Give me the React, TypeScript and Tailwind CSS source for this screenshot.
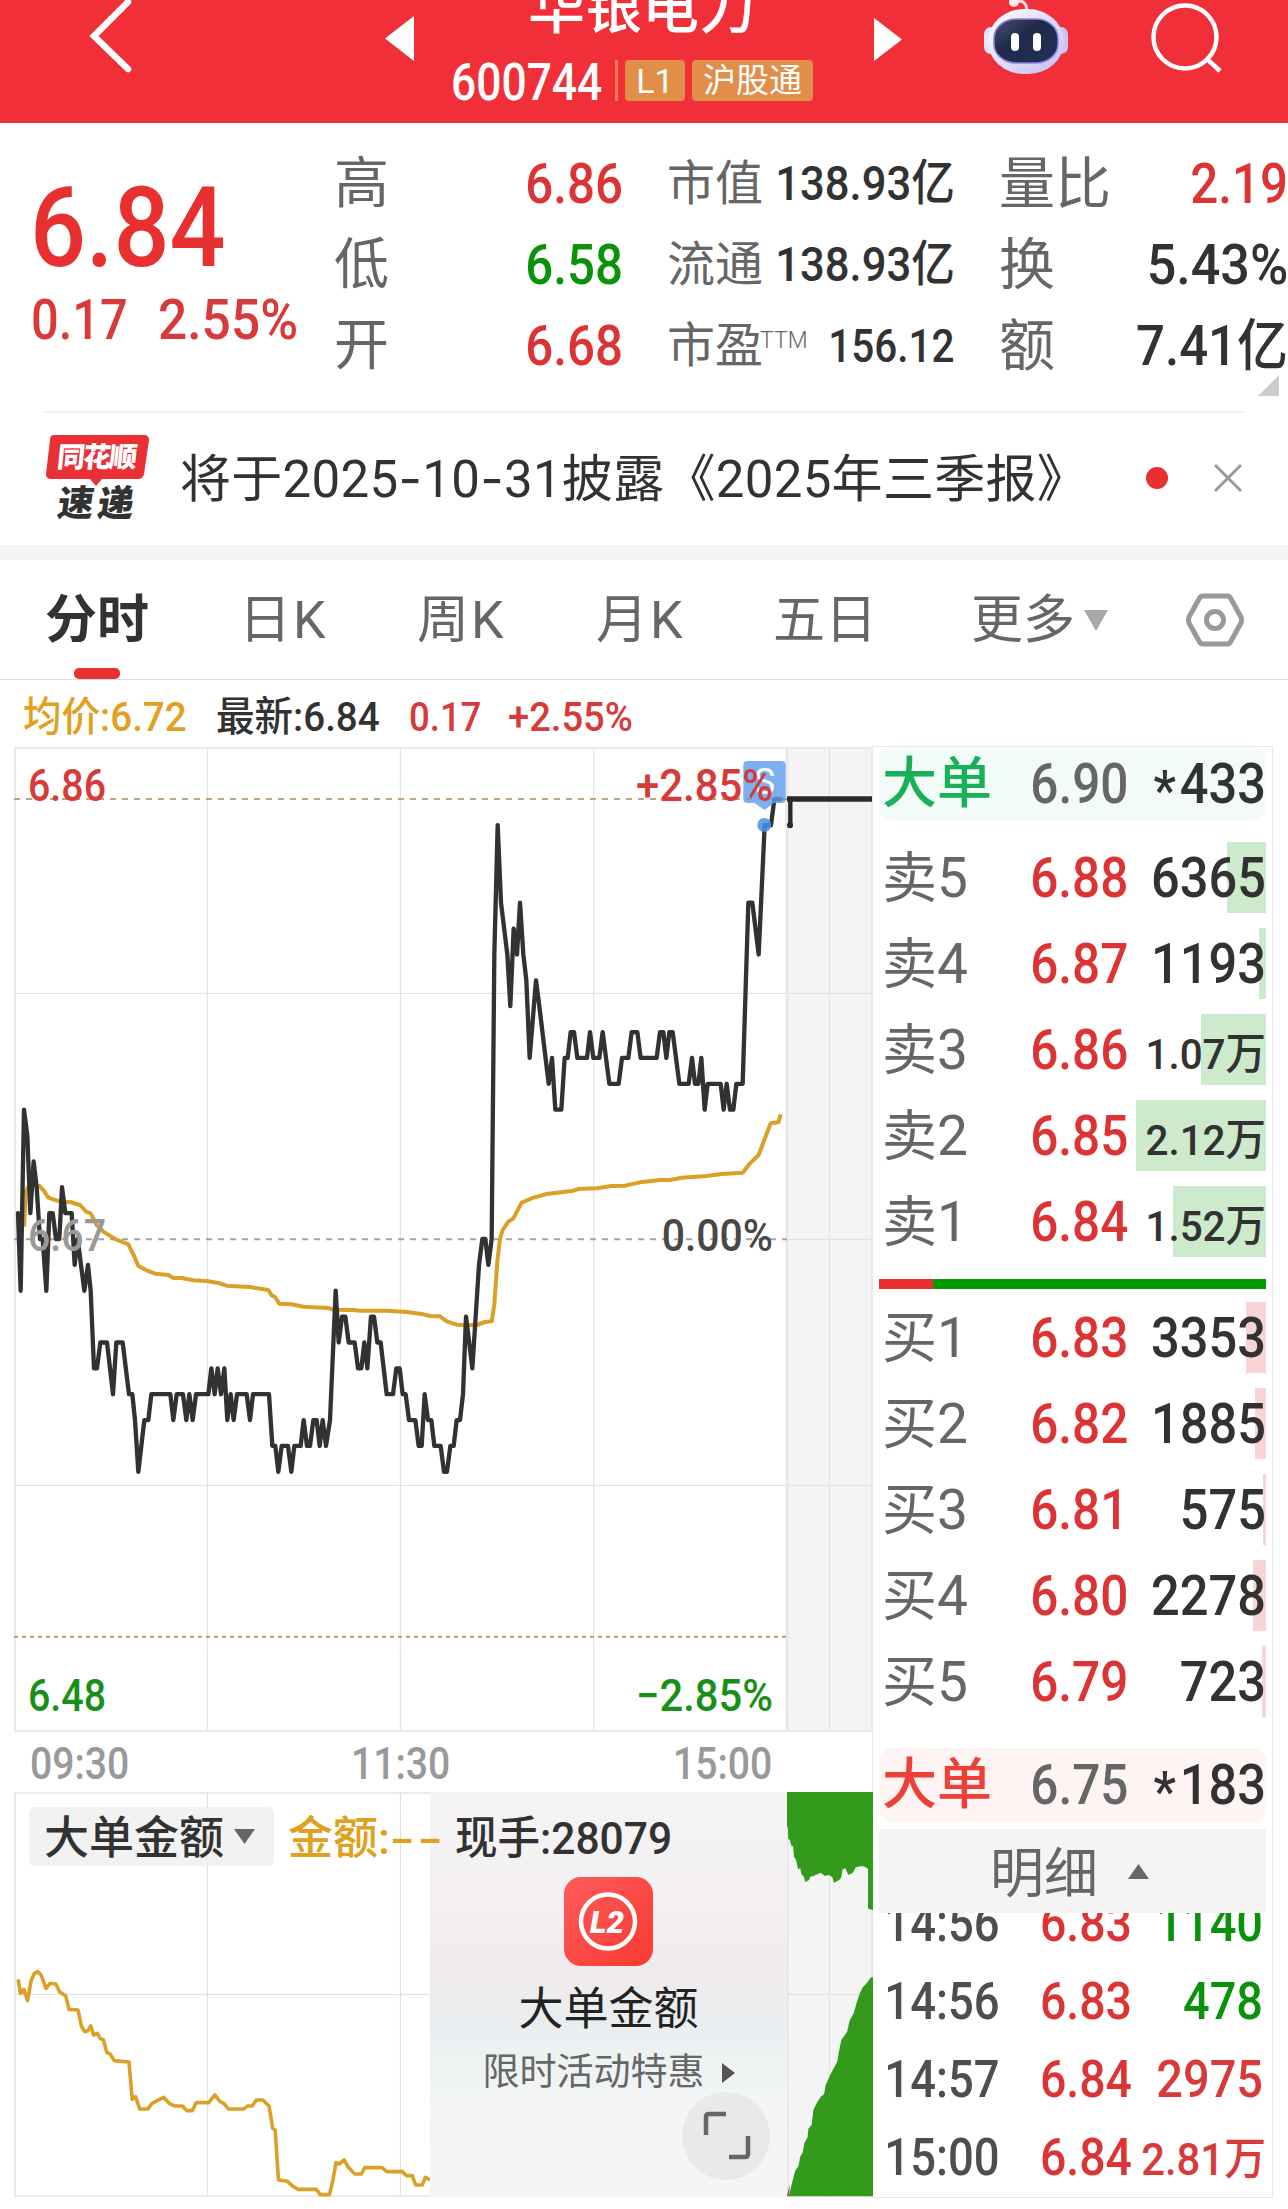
import type { ReactNode } from 'react';

interface Stat {
  label: ReactNode;
  value: string;
  color: string;
}

interface Quote {
  label: string;
  price: string;
  volume: string;
  bar: number;
}

interface Trade {
  time: string;
  price: string;
  volume: string;
  color: string;
}

const statsLeft: Stat[] = [
  { label: '高', value: '6.86', color: 'scale-x-[0.88] text-[#dc3434]' },
  { label: '低', value: '6.58', color: 'scale-x-[0.88] text-[#0a930a]' },
  { label: '开', value: '6.68', color: 'scale-x-[0.88] text-[#dc3434]' },
];

const statsMiddle: Stat[] = [
  { label: '市值', value: '138.93亿', color: 'scale-x-[0.89] text-[#323232] text-[49px]' },
  { label: '流通', value: '138.93亿', color: 'scale-x-[0.89] text-[#323232] text-[49px]' },
  {
    label: (
      <>
        市盈<sup className="-left-[3px] -top-3.5 text-[23px] font-light leading-none">TTM</sup>
      </>
    ),
    value: '156.12',
    color: 'scale-x-[0.88] text-[#323232] text-[46px]',
  },
];

const statsRight: Stat[] = [
  { label: '量比', value: '2.19', color: 'scale-x-[0.88] text-[#dc3434]' },
  { label: '换', value: '5.43%', color: 'scale-x-[0.93] text-[#323232]' },
  { label: '额', value: '7.41亿', color: 'scale-x-[0.91] text-[#323232]' },
];

const sells: Quote[] = [
  { label: '卖5', price: '6.88', volume: '6365', bar: 39 },
  { label: '卖4', price: '6.87', volume: '1193', bar: 7 },
  { label: '卖3', price: '6.86', volume: '1.07万', bar: 65 },
  { label: '卖2', price: '6.85', volume: '2.12万', bar: 130 },
  { label: '卖1', price: '6.84', volume: '1.52万', bar: 93 },
];

const buys: Quote[] = [
  { label: '买1', price: '6.83', volume: '3353', bar: 20 },
  { label: '买2', price: '6.82', volume: '1885', bar: 11 },
  { label: '买3', price: '6.81', volume: '575', bar: 3 },
  { label: '买4', price: '6.80', volume: '2278', bar: 13 },
  { label: '买5', price: '6.79', volume: '723', bar: 4 },
];

const trades: Trade[] = [
  { time: '14:56', price: '6.83', volume: '1140', color: 'text-[#0a930a]' },
  { time: '14:56', price: '6.83', volume: '478', color: 'text-[#0a930a]' },
  { time: '14:57', price: '6.84', volume: '2975', color: 'text-[#d63a3a]' },
  { time: '15:00', price: '6.84', volume: '2.81万', color: 'text-[#d63a3a]' },
];

// [x, ticks above or below the previous close]
const priceTicks: [number, number][] = [
  [54, 1], [62, -2], [72, 5], [82, 4], [91, 1], [101, 3], [110, 2], [120, 0], [128, 0], [139, -2],
  [148, 1], [158, 1], [168, 0], [178, 0], [186, 2], [196, 1], [215, 1], [224, -1], [233, 0], [253, -2],
  [264, -1], [272, -2], [282, -5], [291, -5], [301, -4], [321, -4], [339, -6], [349, -4], [368, -4],
  [387, -6], [397, -6], [405, -7], [415, -9], [433, -7], [445, -7], [454, -6], [511, -6], [520, -7],
  [530, -6], [549, -6], [559, -7], [568, -6], [578, -7], [588, -6], [625, -6], [634, -5], [644, -6],
  [653, -5], [663, -6], [673, -5], [682, -7], [692, -6], [701, -7], [711, -6], [740, -6], [750, -7],
  [759, -6], [807, -6], [817, -8], [826, -8], [835, -9], [845, -8], [864, -8], [874, -9], [883, -8],
  [902, -8], [911, -7], [921, -8], [930, -8], [940, -7], [950, -7], [959, -8], [968, -7], [978, -8],
  [990, -7], [1007, -2], [1016, -4], [1026, -3], [1036, -3], [1046, -4], [1064, -4], [1074, -5],
  [1084, -5], [1093, -4], [1102, -5], [1113, -3], [1122, -3], [1132, -4], [1142, -4], [1160, -6],
  [1179, -6], [1189, -5], [1199, -5], [1208, -6], [1217, -6], [1227, -7], [1246, -7], [1256, -8],
  [1265, -8], [1274, -6], [1284, -7], [1294, -7], [1303, -8], [1322, -8], [1332, -9], [1341, -9],
  [1351, -8], [1361, -8], [1370, -7], [1380, -7], [1389, -6], [1398, -3], [1417, -5], [1437, -1],
  [1447, 0], [1456, 0], [1465, -1], [1475, 0], [1483, 11], [1493, 16], [1503, 13], [1522, 11],
  [1531, 9], [1541, 12], [1551, 11], [1560, 13], [1570, 11], [1579, 10], [1589, 7], [1608, 10],
  [1618, 9], [1646, 6], [1656, 7], [1666, 5], [1684, 5], [1694, 7], [1703, 7], [1712, 8], [1722, 8],
  [1732, 7], [1761, 7], [1770, 8], [1780, 7], [1798, 7], [1808, 8], [1828, 6], [1856, 6], [1866, 7],
  [1885, 7], [1895, 8], [1912, 8], [1922, 7], [1970, 7], [1980, 8], [1990, 8], [1999, 7], [2008, 8],
  [2018, 8], [2038, 6], [2066, 6], [2076, 7], [2085, 6], [2095, 6], [2104, 7], [2114, 5], [2123, 6],
  [2162, 6], [2171, 5], [2180, 6], [2190, 5], [2200, 5], [2209, 6], [2228, 6], [2245, 13], [2257, 13],
  [2276, 11], [2294, 16], [2313, 16], [2323, 17], [2342, 17],
];

const pricePoints = priceTicks.map(([x, t]) => `${x},${1497 - t * 77.6}`).join(' ');

const averagePoints =
  '72,1460 78,1350 90,1335 118,1338 130,1350 145,1373 180,1385 210,1386 240,1395 258,1415 272,1420 290,1455 310,1475 345,1497 385,1513 400,1543 415,1578 440,1591 465,1601 505,1605 520,1614 545,1614 580,1621 620,1623 655,1629 680,1637 750,1641 805,1650 815,1666 825,1671 838,1691 875,1693 910,1700 985,1704 1000,1709 1060,1710 1080,1712 1160,1712 1220,1716 1270,1723 1290,1728 1320,1729 1340,1744 1370,1754 1400,1755 1430,1755 1455,1746 1475,1744 1483,1693 1492,1564 1500,1497 1508,1470 1525,1445 1540,1435 1565,1388 1600,1373 1640,1362 1720,1352 1735,1347 1790,1345 1835,1338 1875,1337 1920,1327 1980,1320 2010,1320 2045,1313 2120,1308 2165,1302 2228,1298 2250,1270 2276,1245 2312,1150 2335,1147 2342,1123';

const amountPoints =
  '44,598 50,640 58,628 67,662 76,600 84,580 92,575 100,585 112,625 122,610 136,612 145,635 160,648 168,688 190,690 198,738 206,755 214,752 221,738 228,765 237,760 244,776 252,780 260,818 268,822 278,842 314,846 322,958 330,950 340,987 360,987 370,970 398,952 412,970 425,978 444,978 455,992 468,992 478,968 508,968 523,945 536,965 545,970 556,987 594,987 602,978 614,978 624,960 640,960 655,978 664,1045 670,1050 678,1200 700,1204 712,1218 726,1228 770,1228 780,1244 802,1244 810,1205 818,1148 826,1152 838,1140 848,1162 864,1182 880,1182 888,1163 930,1163 942,1175 980,1175 990,1187 1004,1187 1012,1215 1028,1215 1036,1192 1047,1200';

function RobotIcon() {
  return (
    <svg className="h-[76px] w-[86px]" viewBox="0 0 86 76">
      <defs>
        <linearGradient id="shell" x1="0" y1="0" x2="1" y2="1">
          <stop offset="0" stopColor="#ffffff" />
          <stop offset="1" stopColor="#c3bdf0" />
        </linearGradient>
        <linearGradient id="visor" x1="0" y1="0" x2="1" y2="1">
          <stop offset="0" stopColor="#4a5270" />
          <stop offset="0.4" stopColor="#1f2a4a" />
          <stop offset="1" stopColor="#25305a" />
        </linearGradient>
      </defs>
      <path d="M31 3c6-4 12-2 13 7" fill="none" stroke="#f6dfe8" strokeWidth="3" />
      <circle cx="31" cy="2" r="5" fill="#fbe9ee" />
      <rect x="1" y="27" width="14" height="27" rx="7" fill="#e3e3fa" />
      <rect x="71" y="27" width="14" height="27" rx="7" fill="#c9c5f2" />
      <rect x="5" y="9" width="76" height="65" rx="36" ry="33" fill="url(#shell)" />
      <rect x="11" y="19" width="64" height="44" rx="22" ry="19" fill="url(#visor)" stroke="#8f80e6" strokeWidth="1.500" />
      <rect x="28" y="33" width="8" height="18" rx="4" fill="#fff" />
      <rect x="50" y="33" width="8" height="18" rx="4" fill="#fff" />
    </svg>
  );
}

function Header() {
  return (
    <header className="flex h-[123px] items-start overflow-hidden bg-[#f12f38] text-white">
      <svg className="ml-[84px] h-[78px] w-[52px] shrink-0" viewBox="0 0 52 78">
        <path d="M44 2 10 36l34 33" fill="none" stroke="#fff" strokeWidth="6.500" strokeLinecap="round" />
      </svg>
      <svg className="ml-[249px] mt-4 h-[45px] w-[29px] shrink-0" viewBox="0 0 29 45">
        <path d="M29 0v45L0 22.5z" fill="#fff" />
      </svg>
      <div className="ml-[36px] w-[365px] shrink-0">
        <div className="-mt-[20px] ml-[78px] h-[56px] text-[57px] font-medium leading-none">华银电力</div>
        <div className="mt-[24px] flex h-[41px] items-center">
          <span className="w-[165px] origin-left translate-x-px scale-x-[0.87] pt-1 text-[51px] font-medium leading-none">600744</span>
          <span className="h-[41px] w-[3px] bg-[#fb7a4b]" />
          <span className="ml-[7px] flex h-[41px] w-[60px] items-center justify-center rounded bg-[#e08e48] text-[34px] leading-none">
            L1
          </span>
          <span className="ml-[7px] flex h-[41px] w-[121px] items-center justify-center rounded bg-[#e08e48] text-[33px] leading-none">
            沪股通
          </span>
        </div>
      </div>
      <svg className="ml-[59px] mt-[18px] h-[43px] w-[28px] shrink-0" viewBox="0 0 28 43">
        <path d="M0 0v43l28-21.5z" fill="#fff" />
      </svg>
      <div className="ml-[81px] shrink-0">
        <RobotIcon />
      </div>
      <svg className="ml-[78px] h-[76px] w-[78px] shrink-0" viewBox="0 0 78 76">
        <circle cx="38" cy="37" r="31.500" fill="none" stroke="#fff" strokeWidth="4.500" />
        <path d="M60 59l13 12" stroke="#fff" strokeWidth="4.500" />
      </svg>
    </header>
  );
}

function StatColumn({ stats, className, labelClass }: { stats: Stat[]; className: string; labelClass: string }) {
  return (
    <div className={`flex flex-col pt-[20px] ${className}`}>
      {stats.map((s, i) => (
        <div key={i} className="flex h-[81px] items-center justify-between whitespace-nowrap">
          <span className={`leading-none text-[#666] ${labelClass}`}>{s.label}</span>
          <span className={`-ml-[24px] origin-right font-medium leading-none ${s.color}`}>{s.value}</span>
        </div>
      ))}
    </div>
  );
}

function Summary() {
  return (
    <section className="relative grid h-[288px] grid-cols-[303px_333px_332px_289px] pl-[31px]">
      <div className="whitespace-nowrap pt-[49px] text-[#e83030]">
        <div className="-ml-[1px] origin-left scale-x-[0.88] text-[112px] font-medium leading-none">6.84</div>
        <div className="mt-[8px] flex text-[56px] font-medium leading-none text-[#d63a3a]">
          <span className="w-[127px] origin-left scale-x-[0.87]">0.17</span>
          <span className="origin-left scale-x-[0.92]">2.55%</span>
        </div>
      </div>
      <StatColumn stats={statsLeft} className="pr-[44px] text-[56px]" labelClass="text-[55px]" />
      <StatColumn stats={statsMiddle} className="pr-[44px]" labelClass="text-[48px]" />
      <StatColumn stats={statsRight} className="text-[56px]" labelClass="text-[56px]" />
      <svg className="absolute right-[9px] top-[252px] h-[21px] w-[21px]" viewBox="0 0 21 21">
        <path d="M21 0v21H0z" fill="#ccc" />
      </svg>
    </section>
  );
}

function News() {
  return (
    <section className="mx-[45px] flex h-[134px] items-center border-t-2 border-[#f0f0f0] pb-1">
      <svg className="h-[90px] w-[106px] shrink-0 overflow-visible" viewBox="0 0 106 90">
        <path d="M9 3h90q5 0 5 5l-5 34q-1 5-6 5H57l-6 7-6-7H6q-5 0-5-5L5 8q0-5 4-5z" fill="#e83035" />
        <text x="12" y="35" fontSize="28" fontWeight="900" fill="#fff" textLength="80" transform="skewX(-6) translate(3 0)">
          同花顺
        </text>
        <text x="14" y="84" fontSize="36" fontWeight="900" fill="#323232" textLength="76" transform="skewX(-8) translate(9 0)">
          速递
        </text>
      </svg>
      <p className="ml-[29px] w-[930px] whitespace-nowrap pt-[4px] text-[51px] leading-none tracking-[0.3px] text-[#323232]">
        将于2025<span className="font-['Inter']">-</span>10<span className="font-['Inter']">-</span>31披露《2025年三季报》
      </p>
      <span className="ml-[38px] mt-[2px] h-[22px] w-[22px] shrink-0 rounded-full bg-[#e83030]" />
      <svg className="ml-[45px] mt-[2px] h-[30px] w-[30px] shrink-0" viewBox="0 0 30 30">
        <path d="M2 2l26 26M28 2L2 28" stroke="#999" strokeWidth="3" />
      </svg>
    </section>
  );
}

function Tabs() {
  return (
    <nav className="grid h-[120px] grid-cols-[194px_178px_179px_177px_198px_215px_auto] items-center border-b border-[#ddd] pl-[45px] text-[52px] leading-none text-[#666]">
      <span className="relative flex h-full items-center pt-[2px] font-bold text-[#323232]">
        分时
        <i className="absolute bottom-0 left-[29px] h-[11px] w-[46px] rounded-[5px] bg-[#e83030]" />
      </span>
      <span className="pt-[2px] tracking-[2px]">日K</span>
      <span className="pt-[2px] tracking-[2px]">周K</span>
      <span className="pt-[2px] tracking-[2px]">月K</span>
      <span className="pt-[2px]">五日</span>
      <span className="flex items-center gap-[8px] pt-[2px]">
        更多
        <svg className="h-[21px] w-[26px]" viewBox="0 0 26 21">
          <path d="M1 0h24L13 21z" fill="#a9a9a9" />
        </svg>
      </span>
      <svg className="h-[56px] w-[58px]" viewBox="0 0 58 56">
        <path d="M17 4h24q3 0 4 3l10 18q1 3 0 6L45 49q-1 3-4 3H17q-3 0-4-3L3 31q-1-3 0-6L13 7q1-3 4-3z" fill="none" stroke="#999" strokeWidth="5" />
        <circle cx="29" cy="28" r="8.500" fill="none" stroke="#999" strokeWidth="5" />
      </svg>
    </nav>
  );
}

function Legend() {
  return (
    <div className="grid h-[67px] grid-cols-[193px_193px_99px_auto] items-center whitespace-nowrap pl-[23px] pt-[7px] text-[41px] font-medium leading-none">
      <span className="origin-left scale-x-[0.94] text-[#e0a020]">均价:6.72</span>
      <span className="origin-left scale-x-[0.94] text-[#323232]">最新:6.84</span>
      <span className="origin-left scale-x-[0.89] text-[#d63a3a]">0.17</span>
      <span className="origin-left scale-x-[0.93] text-[#d63a3a]">+2.55%</span>
    </div>
  );
}

function PriceChart() {
  return (
    <svg className="block h-[985px] w-[859px]" viewBox="42 21 2577 2955">
      <rect x="2361" y="21" width="258" height="2955" fill="#f4f4f4" />
      <g stroke="#dedede" strokeWidth="3">
        <path d="M622 21v2955M1201 21v2955M1781 21v2955M2488 21v2955" />
        <path d="M42 760h2577M42 2236h2577M2361 1498h258" />
      </g>
      <g fill="none" stroke="#e9e9e9" strokeWidth="6">
        <path d="M45 24h2571v2949H45z" />
        <path d="M2361 24v2949" strokeWidth="10" />
      </g>
      <path d="M42 177h2319" stroke="#bfa67a" strokeWidth="6" strokeDasharray="18 18" />
      <path d="M42 1498h2319" stroke="#a4a4a4" strokeWidth="6" strokeDasharray="18 18" />
      <path d="M42 2690h2319" stroke="#c49a66" strokeWidth="6" strokeDasharray="12 12" />
      <polyline points={averagePoints} fill="none" stroke="#dba026" strokeWidth="12" strokeLinejoin="round" />
      <polyline points={pricePoints} fill="none" stroke="#323232" strokeWidth="13" strokeLinejoin="round" strokeLinecap="round" />
      <path d="M2361 177h258" stroke="#2b2b2b" strokeWidth="17" />
      <path d="M2371 177v80" stroke="#2b2b2b" strokeWidth="13" strokeLinecap="round" />
      <circle cx="2370" cy="256" r="9" fill="#2b2b2b" />
      <path d="M2242 63h103q12 0 12 12v102q0 12-12 12h-23l-29 21-29-21h-22q-12 0-12-12V75q0-12 12-12z" fill="#5c9cec" fillOpacity="0.8" />
      <circle cx="2293" cy="255" r="21" fill="#4a8fe6" fillOpacity="0.85" />
      <text x="2293" y="163" fontSize="108" fill="#fff" textAnchor="middle">S</text>
      <g fontSize="135" fontWeight="500">
        <text x="84" y="182" fill="#d63a3a" textLength="234" lengthAdjust="spacingAndGlyphs">6.86</text>
        <text x="84" y="1532" fill="#999" textLength="234" lengthAdjust="spacingAndGlyphs">6.67</text>
        <text x="84" y="2913" fill="#189018" textLength="234" lengthAdjust="spacingAndGlyphs">6.48</text>
        <text x="1908" y="182" fill="#d63a3a" textLength="411" lengthAdjust="spacingAndGlyphs">+2.85%</text>
        <text x="1985" y="1532" fill="#484848" textLength="334" lengthAdjust="spacingAndGlyphs">0.00%</text>
        <text x="1908" y="2913" fill="#189018" textLength="411" lengthAdjust="spacingAndGlyphs">−2.85%</text>
      </g>
    </svg>
  );
}

function PromoPanel() {
  return (
    <div className="relative flex h-full w-[357px] flex-col items-center bg-[linear-gradient(180deg,#f5f4f5_0%,#f4f0f3_25%,#f1eaec_44%,#eaedef_56%,#edf2f3_66%,#f4f5f7_78%,#f6f4f7_100%)] pt-[85px]">
      <svg className="h-[89px] w-[89px]" viewBox="0 0 89 89">
        <defs>
          <linearGradient id="badge" x1="0" y1="0" x2="1" y2="1">
            <stop offset="0" stopColor="#fe5b5b" />
            <stop offset="1" stopColor="#f93a30" />
          </linearGradient>
        </defs>
        <rect width="89" height="89" rx="17" fill="url(#badge)" />
        <circle cx="44" cy="44.500" r="27" fill="none" stroke="#fff" strokeWidth="4.500" />
        <text x="43" y="56" fontSize="31" fontWeight="900" fontStyle="italic" fill="#fff" textAnchor="middle" textLength="34" lengthAdjust="spacingAndGlyphs">
          L2
        </text>
      </svg>
      <div className="mt-[21px] text-[45px] leading-none text-[#222]">大单金额</div>
      <div className="mt-[22px] flex items-center gap-[17px] text-[37px] leading-none text-[#666]">
        限时活动特惠
        <svg className="h-[20px] w-[13px]" viewBox="0 0 13 20">
          <path d="M0 0l13 10L0 20z" fill="#555" />
        </svg>
      </div>
      <div className="absolute left-[252px] top-[300px] flex h-[88px] w-[88px] items-center justify-center rounded-full bg-[#e9e9e9]">
        <svg className="h-[50px] w-[50px]" viewBox="0 0 50 50">
          <path d="M5 24V6q0-3 3-3h17M28 46h16q3 0 3-3V25" fill="none" stroke="#666" strokeWidth="4.500" />
        </svg>
      </div>
    </div>
  );
}

function AmountChart() {
  return (
    <div className="relative flex h-[405px] w-[859px]">
      <svg className="h-full w-[416px]" viewBox="34 36 1013 1215" preserveAspectRatio="none">
        <path d="M505 36v1215M975 36v1215M34 643h1013" stroke="#dedede" vectorEffect="non-scaling-stroke" />
        <path d="M1047 38H36v1211h1011" fill="none" stroke="#e9e9e9" strokeWidth="2" vectorEffect="non-scaling-stroke" />
        <polyline points={amountPoints} fill="none" stroke="#dba026" strokeWidth="3.600" strokeLinejoin="round" vectorEffect="non-scaling-stroke" />
      </svg>
      <PromoPanel />
      <svg className="h-full w-[86px]" viewBox="348 36 209 1215" preserveAspectRatio="none">
        <rect x="348" y="36" width="209" height="1215" fill="#f4f4f4" />
        <path d="M451 36v1215M348 643h209M350 36v1215" stroke="#dedede" vectorEffect="non-scaling-stroke" />
        <path d="M555 36v1215" stroke="#e6e6e6" strokeWidth="2" vectorEffect="non-scaling-stroke" />
        <path
          d="M348 36H557V390L545 386V268L540 262 530 258 515 262 508 278 497 285 490 265 483 268 480 292 475 300 462 308 458 292 450 285 440 288 430 278 412 288 404 290 402 300 392 306 389 290 383 282 380 265 375 268 370 240 365 230 363 200 358 196 355 180 351 176 350 140 348 140z"
          fill="#339a1c"
        />
        <path
          d="M353 1249L358 1220 362 1200 368 1172 376 1158 380 1130 386 1118 390 1090 398 1072 400 1046 408 1034 412 990 420 970 430 950 438 943 442 915 455 880 470 845 475 810 480 780 494 756 500 722 510 700 518 665 525 640 532 622 540 612 552 592H557V1249z"
          fill="#339a1c"
        />
        <path d="M348 1249L354 1215V1249z" fill="#a0522d" />
      </svg>
      <div className="absolute left-[15px] top-[15px] flex h-[59px] items-center whitespace-nowrap text-[45px] font-medium leading-none text-[#323232]">
        <div className="flex h-full w-[245px] items-center rounded-md bg-[#f1f1f1]/90 pl-[15px]">
          <span className="pt-[3px]">大单金额</span>
          <svg className="ml-[10px] h-[15px] w-[21px]" viewBox="0 0 21 15">
            <path d="M0 0h21L10.500 15z" fill="#666" />
          </svg>
        </div>
        <span className="ml-[14px] w-[167px] pt-[3px] text-[#e0a020]">
          金额:<span className="inline-block w-[28px] origin-left scale-x-[1.6]">-</span>
          <span className="inline-block origin-left scale-x-[1.6]">-</span>
        </span>
        <span className="origin-left scale-x-[0.945] pt-[3px]">现手:28079</span>
      </div>
    </div>
  );
}

function QuoteRow({ quote, side }: { quote: Quote; side: 'sell' | 'buy' }) {
  const large = quote.volume.endsWith('万');
  return (
    <div className="relative flex h-[86px] items-center leading-none">
      <span
        className={`absolute right-0 top-[7px] h-[71px] ${side === 'sell' ? 'bg-[#cdeacd]' : 'bg-[#f9d4d4]'}`}
        style={{ width: quote.bar }}
      />
      <span className="relative w-[100px] pl-[3px] text-[55px] text-[#666]">{quote.label}</span>
      <span className="relative w-[150px] origin-right scale-x-[0.9] text-right text-[55px] font-medium text-[#dc3434]">
        {quote.price}
      </span>
      <span
        className={`relative w-[138px] shrink-0 origin-right whitespace-nowrap text-right font-medium text-[#323232] ${
          large ? 'scale-x-[0.94] pt-[8px] text-[43px]' : 'scale-x-[0.92] text-[55px]'
        }`}
      >
        {quote.volume}
      </span>
    </div>
  );
}

function BigOrder({ price, volume, className }: { price: string; volume: string; className: string }) {
  return (
    <div className={`flex h-[74px] items-center rounded-[14px] leading-none ${className}`}>
      <span className="w-[115px] pb-[2px] pl-[3px] text-[55px] font-medium">大单</span>
      <span className="w-[135px] origin-right scale-x-[0.9] text-right text-[55px] font-medium text-[#666]">{price}</span>
      <span className="flex w-[138px] shrink-0 origin-right scale-x-[0.92] items-center justify-end text-[55px] font-medium text-[#323232]">
        <span className="mr-1 pt-[14px]">*</span>
        {volume}
      </span>
    </div>
  );
}

function OrderBook() {
  return (
    <aside className="-mt-px h-[1452px] w-[401px] overflow-hidden border border-[#e8e8e8] px-[6px]">
      <BigOrder price="6.90" volume="433" className="bg-[#f2fbf7] text-[#18b058]" />
      <div className="mt-[14px]">
        {sells.map(q => (
          <QuoteRow key={q.label} quote={q} side="sell" />
        ))}
      </div>
      <div className="mt-[14px] flex h-[10px]">
        <span className="w-[54px] bg-[#e83030]" />
        <span className="flex-1 bg-[#009b00]" />
      </div>
      <div className="mt-[6px]">
        {buys.map(q => (
          <QuoteRow key={q.label} quote={q} side="buy" />
        ))}
      </div>
      <div className="mt-[23px]">
        <BigOrder price="6.75" volume="183" className="bg-[#fef4f3] text-[#ee4036]" />
      </div>
      <div className="relative z-10 mt-[7px] flex h-[84px] items-center bg-[#f4f4f4] pl-[111px] text-[54px] leading-none text-[#666]">
        <span className="pt-[7px]">明细</span>
        <svg className="ml-[30px] h-[15px] w-[21px]" viewBox="0 0 21 15">
          <path d="M10.500 0L21 15H0z" fill="#666" />
        </svg>
      </div>
      <div className="-mt-[29px]">
        {trades.map((t, i) => (
          <div key={i} className="flex h-[78px] items-center whitespace-nowrap text-[51px] font-medium leading-none">
            <span className="w-[120px] origin-left scale-x-[0.89] pl-[6px] text-[#4e4e4e]">{t.time}</span>
            <span className="w-[133px] origin-right scale-x-[0.91] text-right text-[#dc3434]">{t.price}</span>
            <span
              className={`w-[131px] shrink-0 origin-right text-right ${t.color} ${
                t.volume.endsWith('万') ? 'scale-x-[0.93] pt-[5px] text-[45px]' : 'scale-x-[0.92]'
              }`}
            >
              {t.volume}
            </span>
          </div>
        ))}
      </div>
    </aside>
  );
}

export default function App() {
  return (
    <div className="h-[2209px] w-[1288px] overflow-hidden bg-white font-['Roboto','Noto_Sans_CJK_SC',sans-serif]">
      <Header />
      <Summary />
      <News />
      <div className="h-[15px] bg-[#f4f4f4]" />
      <Tabs />
      <Legend />
      <div className="flex">
        <div className="ml-[14px] w-[858px]">
          <PriceChart />
          <div className="grid h-[60px] grid-cols-3 items-center pl-[16px] pr-[100px] pt-[2px] text-[45px] font-medium leading-none text-[#999]">
            <span className="origin-left scale-x-[0.87]">09:30</span>
            <span className="scale-x-[0.87] text-center">11:30</span>
            <span className="origin-right scale-x-[0.87] text-right">15:00</span>
          </div>
          <AmountChart />
        </div>
        <OrderBook />
      </div>
    </div>
  );
}
